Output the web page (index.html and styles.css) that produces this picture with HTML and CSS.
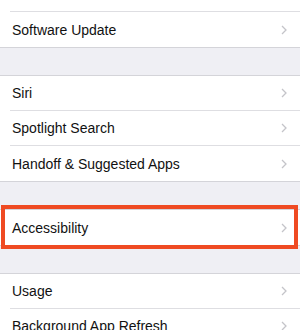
FILE: index.html
```html
<!DOCTYPE html>
<html>
<head>
<meta charset="utf-8">
<link rel="stylesheet" href="styles.css">
</head>
<body>
<div class="page">
  <div class="group group-first">
    <div class="row"><div class="row-inner"><span class="label">About</span><svg class="chev" viewBox="0 0 6 10"><path d="M1 1 L5 5 L1 9"/></svg></div></div>
    <div class="row"><div class="row-inner last"><span class="label">Software Update</span><svg class="chev" viewBox="0 0 6 10"><path d="M1 1 L5 5 L1 9"/></svg></div></div>
  </div>
  <div class="group">
    <div class="row"><div class="row-inner"><span class="label">Siri</span><svg class="chev" viewBox="0 0 6 10"><path d="M1 1 L5 5 L1 9"/></svg></div></div>
    <div class="row"><div class="row-inner"><span class="label">Spotlight Search</span><svg class="chev" viewBox="0 0 6 10"><path d="M1 1 L5 5 L1 9"/></svg></div></div>
    <div class="row"><div class="row-inner last"><span class="label">Handoff &amp; Suggested Apps</span><svg class="chev" viewBox="0 0 6 10"><path d="M1 1 L5 5 L1 9"/></svg></div></div>
  </div>
  <div class="group">
    <div class="row highlighted"><div class="row-inner last"><span class="label">Accessibility</span><svg class="chev" viewBox="0 0 6 10"><path d="M1 1 L5 5 L1 9"/></svg></div><span class="callout"></span></div>
  </div>
  <div class="group">
    <div class="row"><div class="row-inner"><span class="label">Usage</span><svg class="chev" viewBox="0 0 6 10"><path d="M1 1 L5 5 L1 9"/></svg></div></div>
    <div class="row"><div class="row-inner"><span class="label">Background App Refresh</span><svg class="chev" viewBox="0 0 6 10"><path d="M1 1 L5 5 L1 9"/></svg></div></div>
  </div>
</div>
</body>
</html>
```

FILE: styles.css
```css
html, body {
  margin: 0;
  padding: 0;
  background: #efeff4;
  font-family: "Liberation Sans", Arial, sans-serif;
  overflow: hidden;
}
.page {
  display: flex;
  flex-direction: column;
  gap: 27px;
  width: 300px;
}
.group {
  background: #fff;
  border-top: 1px solid #d4d4d9;
  border-bottom: 1px solid #d4d4d9;
}
.group-first {
  margin-top: -24px;
}
.row {
  position: relative;
  background: #fff;
}
.row-inner {
  margin-left: 10px;
  height: 34px;
  display: flex;
  align-items: center;
  justify-content: space-between;
  padding-right: 13px;
  border-bottom: 1px solid #dedee2;
}
.row-inner.last {
  border-bottom: none;
  height: 35px;
}
.label {
  padding-left: 2px;
  font-size: 14px;
  color: #111;
}
.chev {
  width: 6px;
  height: 10px;
  fill: none;
  stroke: #c4c4c9;
  stroke-width: 1.3;
}
.callout {
  position: absolute;
  top: -5px;
  bottom: -4px;
  left: 1px;
  right: 2px;
  border: 4px solid #ef4a22;
  pointer-events: none;
}
```
